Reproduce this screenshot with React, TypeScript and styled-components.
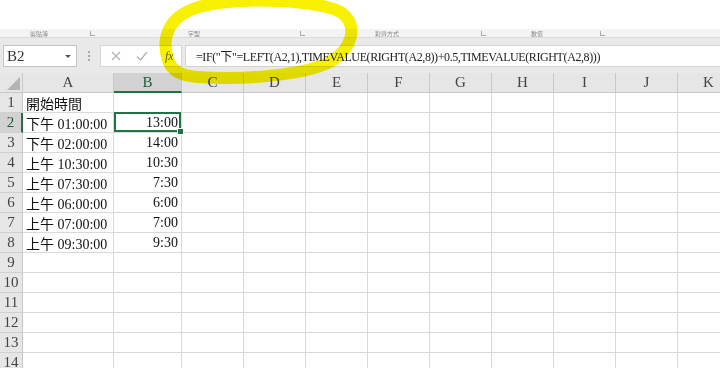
import styled, { createGlobalStyle } from "styled-components";

const GlobalStyle = createGlobalStyle`
  html, body {
    margin: 0;
    padding: 0;
    background: #ffffff;
    overflow: hidden;
  }
`;

const SERIF = `"Liberation Serif", "Noto Sans CJK TC", serif`;

const Page = styled.div`
  position: relative;
  width: 720px;
  height: 368px;
  overflow: hidden;
  background: #ffffff;
  font-family: ${SERIF};
`;

const TopSpace = styled.div`
  height: 29px;
  background: #ffffff;
`;

const GroupStrip = styled.div`
  height: 8px;
  background: #f3f3f3;
  border-bottom: 1px solid #dcdcdc;
  display: flex;
  align-items: center;
  font-family: "Noto Sans CJK TC", sans-serif;
  font-size: 6px;
  line-height: 7px;
  color: #888;
`;

const GroupLabel = styled.span<{ $left: number; $width: number }>`
  margin-left: ${({ $left }) => $left}px;
  width: ${({ $width }) => $width}px;
  flex-shrink: 0;
  white-space: nowrap;
`;

const Launcher = styled.span`
  width: 4px;
  height: 4px;
  border-left: 1px solid #aaa;
  border-bottom: 1px solid #aaa;
  flex-shrink: 0;
`;

const FormulaArea = styled.div`
  height: 35px;
  box-sizing: border-box;
  padding: 7px 0 6px 3px;
  background: #e9e9e9;
  display: flex;
  align-items: stretch;
`;

const NameBox = styled.div`
  width: 74px;
  box-sizing: border-box;
  background: #fff;
  border: 1px solid #c6c6c6;
  display: flex;
  align-items: center;
  justify-content: space-between;
  padding: 0 5px 0 3px;
  font-size: 15px;
  color: #333;
`;

const Caret = styled.span`
  width: 0;
  height: 0;
  border-left: 3px solid transparent;
  border-right: 3px solid transparent;
  border-top: 3px solid #555;
`;

const Grip = styled.div`
  width: 23px;
  display: flex;
  flex-direction: column;
  align-items: center;
  justify-content: center;
  gap: 2px;
  & > i {
    width: 2px;
    height: 2px;
    background: #aaa;
  }
`;

const ButtonBox = styled.div`
  width: 82px;
  box-sizing: border-box;
  background: #fff;
  border: 1px solid #d4d4d4;
  display: flex;
  align-items: center;
  padding-left: 10px;
  gap: 15px;
`;

const FxText = styled.span`
  font-style: italic;
  font-size: 12px;
  color: #666;
  margin-left: 2px;
`;

const FormulaInput = styled.div`
  flex: 1;
  margin-left: 3px;
  box-sizing: border-box;
  background: #fff;
  border: 1px solid #d4d4d4;
  border-right: none;
  display: flex;
  align-items: center;
  padding-left: 10px;
  font-size: 12px;
  letter-spacing: -0.4px;
  color: #222;
  white-space: nowrap;
`;

const Sheet = styled.div`
  display: grid;
  grid-template-columns: 23px 91px 68px repeat(9, 62px);
  grid-auto-rows: 20px;
`;

const Corner = styled.div`
  position: relative;
  background: #e6e6e6;
  border-right: 1px solid #c8c8c8;
  border-bottom: 1px solid #c8c8c8;
  box-sizing: border-box;
  &::after {
    content: "";
    position: absolute;
    right: 2px;
    bottom: 2px;
    width: 0;
    height: 0;
    border-left: 13px solid transparent;
    border-bottom: 13px solid #b4b4b4;
  }
`;

const ColHead = styled.div<{ $active?: boolean }>`
  box-sizing: border-box;
  background: ${({ $active }) => ($active ? "#d2d2d2" : "#e6e6e6")};
  border-right: 1px solid #c8c8c8;
  border-bottom: ${({ $active }) =>
    $active ? "2px solid #217346" : "1px solid #c8c8c8"};
  display: flex;
  align-items: center;
  justify-content: center;
  font-size: 15px;
  color: ${({ $active }) => ($active ? "#1e5c3a" : "#444")};
`;

const RowHead = styled.div<{ $active?: boolean }>`
  box-sizing: border-box;
  background: ${({ $active }) => ($active ? "#d2d2d2" : "#e6e6e6")};
  border-right: ${({ $active }) =>
    $active ? "2px solid #217346" : "1px solid #c8c8c8"};
  border-bottom: 1px solid #d0d0d0;
  display: flex;
  align-items: center;
  justify-content: center;
  font-size: 15px;
  color: ${({ $active }) => ($active ? "#1e5c3a" : "#444")};
`;

const Cell = styled.div<{ $align?: "left" | "right"; $selected?: boolean }>`
  position: relative;
  box-sizing: border-box;
  border-right: 1px solid #d9d9d9;
  border-bottom: 1px solid #d9d9d9;
  display: flex;
  align-items: center;
  justify-content: ${({ $align }) =>
    $align === "right" ? "flex-end" : "flex-start"};
  padding: 1px 3px 0 3px;
  font-size: 14px;
  color: #111;
  white-space: nowrap;
  box-shadow: ${({ $selected }) =>
    $selected ? "inset 0 0 0 2px #217346" : "none"};
  margin-top: ${({ $selected }) => ($selected ? "-1px" : "0")};
  height: ${({ $selected }) => ($selected ? "21px" : "auto")};
  &::after {
    content: "";
    display: ${({ $selected }) => ($selected ? "block" : "none")};
    position: absolute;
    right: -3px;
    bottom: -3px;
    width: 5px;
    height: 5px;
    background: #217346;
    border: 1px solid #fff;
    z-index: 2;
  }
`;

const Highlight = styled.svg`
  position: absolute;
  left: 0;
  top: 0;
  pointer-events: none;
  mix-blend-mode: multiply;
`;

const columns = ["A", "B", "C", "D", "E", "F", "G", "H", "I", "J", "K"];

const data: [string, string][] = [
  ["開始時間", ""],
  ["下午 01:00:00", "13:00"],
  ["下午 02:00:00", "14:00"],
  ["上午 10:30:00", "10:30"],
  ["上午 07:30:00", "7:30"],
  ["上午 06:00:00", "6:00"],
  ["上午 07:00:00", "7:00"],
  ["上午 09:30:00", "9:30"],
];

const ROWS = 14;

export default function App() {
  return (
    <>
      <GlobalStyle />
      <Page>
        <TopSpace />
        <GroupStrip>
          <GroupLabel $left={30} $width={60}>剪貼簿</GroupLabel>
          <Launcher />
          <GroupLabel $left={93} $width={112}>字型</GroupLabel>
          <Launcher />
          <GroupLabel $left={70} $width={106}>對齊方式</GroupLabel>
          <Launcher />
          <GroupLabel $left={45} $width={69}>數值</GroupLabel>
          <Launcher />
        </GroupStrip>
        <FormulaArea>
          <NameBox>
            <span>B2</span>
            <Caret />
          </NameBox>
          <Grip>
            <i />
            <i />
            <i />
          </Grip>
          <ButtonBox>
            <svg width="10" height="10" viewBox="0 0 10 10">
              <path d="M1 1L9 9M9 1L1 9" stroke="#b0b0b0" strokeWidth="1.2" fill="none" />
            </svg>
            <svg width="12" height="10" viewBox="0 0 12 10">
              <path d="M1 5.5L4.5 9L11 1" stroke="#b0b0b0" strokeWidth="1.2" fill="none" />
            </svg>
            <FxText>fx</FxText>
          </ButtonBox>
          <FormulaInput>
            =IF("下"=LEFT(A2,1),TIMEVALUE(RIGHT(A2,8))+0.5,TIMEVALUE(RIGHT(A2,8)))
          </FormulaInput>
        </FormulaArea>
        <Sheet>
          <Corner />
          {columns.map((c) => (
            <ColHead key={c} $active={c === "B"}>
              {c}
            </ColHead>
          ))}
          {Array.from({ length: ROWS }, (_, r) => {
            const row = data[r];
            return [
              <RowHead key={`h${r}`} $active={r === 1}>
                {r + 1}
              </RowHead>,
              ...columns.map((c, ci) => (
                <Cell
                  key={`${r}-${c}`}
                  $align={ci === 1 ? "right" : "left"}
                  $selected={r === 1 && ci === 1}
                >
                  {row && ci < 2 ? row[ci] : ""}
                </Cell>
              )),
            ];
          })}
        </Sheet>
        <Highlight width="720" height="368" viewBox="0 0 720 368">
          <path
            d="M168 60 C161 38, 168 16, 199 7 C240 -4, 322 0, 342 13 C358 26, 353 48, 330 62 C302 76, 240 80, 198 77 C181 76, 171 70, 168 60 Z"
            fill="none"
            stroke="#f7f000"
            strokeWidth="12"
            strokeLinecap="round"
          />
        </Highlight>
      </Page>
    </>
  );
}
